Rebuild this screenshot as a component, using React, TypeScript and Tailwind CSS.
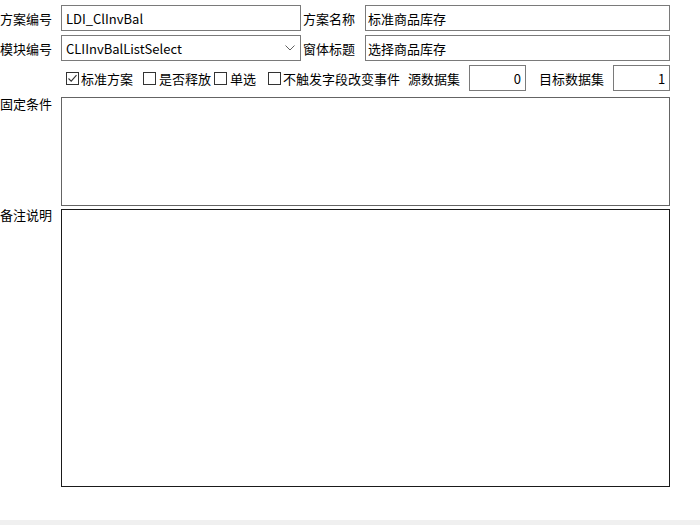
import React from "react";

const font = { fontFamily: '"Noto Sans CJK SC", "Noto Sans", sans-serif' };

function Box({ checked }: { checked?: boolean }) {
  return (
    <span className="w-[13px] h-[13px] border border-[#333333] bg-white flex items-center justify-center shrink-0">
      {checked && (
        <svg width="11" height="11" viewBox="0 0 11 11">
          <path d="M1.5 5.5 L4.2 8.2 L9.5 2.2" fill="none" stroke="#333333" strokeWidth="1.1" />
        </svg>
      )}
    </span>
  );
}

export default function App() {
  return (
    <div
      className="w-[700px] h-[525px] bg-white flex flex-col text-[13px] leading-none text-black overflow-hidden"
      style={font}
    >
      <div className="flex flex-col pt-[5px]">
        {/* row 1 */}
        <div className="flex items-center h-[26px]">
          <div className="w-[61px] shrink-0">方案编号</div>
          <div className="w-[240px] h-[26px] border border-[#7a7a7a] flex items-center pl-[4px]">LDI_ClInvBal</div>
          <div className="w-[64px] pl-[2px] shrink-0">方案名称</div>
          <div className="w-[305px] h-[26px] border border-[#7a7a7a] flex items-center pl-[2px]">标准商品库存</div>
        </div>
        {/* row 2 */}
        <div className="flex items-center h-[26px] mt-[4px]">
          <div className="w-[61px] shrink-0">模块编号</div>
          <div className="w-[240px] h-[26px] border border-[#7a7a7a] flex items-center pl-[4px] pr-[4px] justify-between">
            <span>CLIInvBalListSelect</span>
            <svg width="10" height="6" viewBox="0 0 10 6" className="mr-[1px]">
              <path d="M0.5 0.5 L5 5 L9.5 0.5" fill="none" stroke="#606060" strokeWidth="1" />
            </svg>
          </div>
          <div className="w-[64px] pl-[2px] shrink-0">窗体标题</div>
          <div className="w-[305px] h-[26px] border border-[#7a7a7a] flex items-center pl-[2px]">选择商品库存</div>
        </div>
        {/* row 3 */}
        <div className="flex items-center h-[26px] mt-[4px]">
          <div className="ml-[66px] flex items-center gap-[2px]">
            <Box checked />
            <span>标准方案</span>
          </div>
          <div className="ml-[10px] flex items-center gap-[3px]">
            <Box />
            <span>是否释放</span>
          </div>
          <div className="ml-[3px] flex items-center gap-[3px]">
            <Box />
            <span>单选</span>
          </div>
          <div className="ml-[12px] flex items-center gap-[2px]">
            <Box />
            <span>不触发字段改变事件</span>
          </div>
          <span className="ml-[8px]">源数据集</span>
          <div className="ml-[9px] w-[57px] h-[26px] border border-[#7a7a7a] flex items-center justify-end pr-[4px]">0</div>
          <span className="ml-[13px]">目标数据集</span>
          <div className="ml-[9px] w-[57px] h-[26px] border border-[#7a7a7a] flex items-center justify-end pr-[4px]">1</div>
        </div>
        {/* row 4 */}
        <div className="flex mt-[6px]">
          <div className="w-[61px] shrink-0">固定条件</div>
          <div className="w-[609px] h-[109px] border border-[#646464]" />
        </div>
        {/* row 5 */}
        <div className="flex mt-[3px]">
          <div className="w-[61px] shrink-0 -mt-[1px]">备注说明</div>
          <div className="w-[609px] h-[278px] border border-[#1a1a1a]" />
        </div>
      </div>
      <div className="mt-auto h-[5px] bg-[#f0f0f0]" />
    </div>
  );
}
